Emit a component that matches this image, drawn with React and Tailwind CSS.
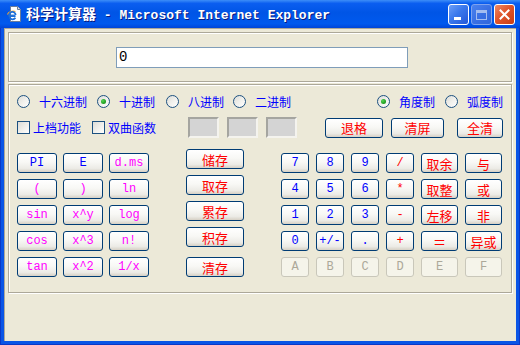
import React from "react";

const MONO = "[font-family:'Liberation_Mono','Noto_Sans_CJK_SC',monospace] text-[12px]";
const CJK = "[font-family:'Noto_Sans_CJK_SC',sans-serif] text-[13px]";
const COLORS = { b: "text-[#0000ff]", m: "text-[#ff00ff]", r: "text-[#ff0000]" };

const isCJK = (s) => /[\u3000-\u9fff\uff00-\uffef]/.test(s);

function Btn({ label, color, w, disabled }) {
  return (
    <div
      className={
        "h-[20px] flex items-center justify-center rounded-[3px] border leading-none " +
        (isCJK(label) ? CJK : MONO) +
        " " +
        w +
        " " +
        (disabled
          ? "border-[#c9c7ba] bg-[#f5f4ea] text-[#aca899]"
          : "border-[#003c74] bg-[linear-gradient(180deg,#ffffff_0%,#f8f8f5_45%,#ecebe6_80%,#d6d0c5_100%)] " + COLORS[color])
      }
    >
      {label}
    </div>
  );
}

function Radio({ checked }) {
  return (
    <div className="w-[13px] h-[13px] rounded-full border border-[#1c5180] bg-[linear-gradient(135deg,#dcdcd7_0%,#f0f0ec_50%,#ffffff_100%)] flex items-center justify-center shrink-0">
      {checked && <div className="w-[5px] h-[5px] rounded-full bg-[radial-gradient(circle_at_35%_35%,#55d455_0%,#21a121_60%,#1a8a1a_100%)]" />}
    </div>
  );
}

function Check() {
  return <div className="w-[13px] h-[13px] border border-[#1c5180] bg-[linear-gradient(135deg,#dcdcd7_0%,#f0f0ec_55%,#ffffff_100%)] shrink-0" />;
}

function RadioItem({ label, checked, className = "" }) {
  return (
    <div className={"flex items-center gap-[9px] " + className}>
      <Radio checked={checked} />
      <span className="text-[12px] leading-none text-[#0000ff] [font-family:'Noto_Sans_CJK_SC',sans-serif] whitespace-nowrap">{label}</span>
    </div>
  );
}

function GrayBox() {
  return <div className="w-[31px] h-[21px] bg-[#d4d4d4] border-2 border-t-[#a5a5a0] border-l-[#a5a5a0] border-r-[#f4f3ee] border-b-[#f4f3ee]" />;
}

const leftRows = [
  [["PI", "b"], ["E", "b"], ["d.ms", "m"]],
  [["(", "m"], [")", "m"], ["ln", "m"]],
  [["sin", "m"], ["x^y", "m"], ["log", "m"]],
  [["cos", "m"], ["x^3", "m"], ["n!", "m"]],
  [["tan", "m"], ["x^2", "m"], ["1/x", "m"]],
];

const rightRows = [
  [["7", "b"], ["8", "b"], ["9", "b"], ["/", "r"], ["取余", "r"], ["与", "r"]],
  [["4", "b"], ["5", "b"], ["6", "b"], ["*", "r"], ["取整", "r"], ["或", "r"]],
  [["1", "b"], ["2", "b"], ["3", "b"], ["-", "r"], ["左移", "r"], ["非", "r"]],
  [["0", "b"], ["+/-", "b"], [".", "b"], ["+", "r"], ["＝", "r"], ["异或", "r"]],
];

function IEIcon() {
  return (
    <svg width="16" height="16" viewBox="0 0 16 16" className="shrink-0">
      <path d="M4.5 0.5h7l3 3v12h-10z" fill="#ffffff" stroke="#6b7c99" />
      <path d="M11.5 0.5v3h3" fill="#dfe4ee" stroke="#6b7c99" />
      <path d="M1.5 8.5c1-3 5-4 8-3" fill="none" stroke="#f0a030" strokeWidth="1.2" />
      <path d="M9.6 10.2H3.4a3.2 3.2 0 1 1 6.2-1.2M3.6 11.2a3.2 3.2 0 0 0 5.8 0.6" fill="none" stroke="#1e6fd9" strokeWidth="1.8" />
      <path d="M4 9.2h5" stroke="#1e6fd9" strokeWidth="1.2" />
    </svg>
  );
}

export default function App() {
  return (
    <div className="w-[520px] h-[345px] overflow-hidden flex flex-col bg-[#0a55e6]">
      {/* Title bar */}
      <div className="h-[28px] shrink-0 flex items-center pl-[6px] pr-[5px] bg-[linear-gradient(180deg,#3d8ef8_0%,#0b5ef0_12%,#0055e6_45%,#0059ee_85%,#0045d8_100%)]">
        <IEIcon />
        <span className="ml-[4px] text-white font-bold leading-none whitespace-nowrap [text-shadow:1px_1px_0_#0a1a80] [font-family:'Liberation_Mono','Noto_Sans_CJK_SC',monospace] text-[13px]">
          <span className="text-[14px] [font-family:'Noto_Sans_CJK_SC',sans-serif]">科学计算器</span> - Microsoft Internet Explorer
        </span>
        <div className="ml-auto flex gap-[2px]">
          <div className="relative w-[21px] h-[21px] rounded-[3px] border border-white bg-[linear-gradient(135deg,#6d9ff7_0%,#3a78ec_45%,#2458d8_100%)]">
            <div className="absolute left-[5px] top-[12px] w-[7px] h-[3px] bg-white" />
          </div>
          <div className="relative w-[21px] h-[21px] rounded-[3px] border border-[#7fa3ee] bg-[linear-gradient(135deg,#4a82ee_0%,#3a70e4_50%,#3066dc_100%)]">
            <div className="absolute left-[4px] top-[5px] w-[11px] h-[10px] border border-[#a4bdf0] border-t-[3px]" />
          </div>
          <div className="relative w-[21px] h-[21px] rounded-[3px] border border-white bg-[linear-gradient(135deg,#ee8a66_0%,#e0552c_45%,#c73d14_100%)] flex items-center justify-center">
            <svg width="11" height="11" viewBox="0 0 11 11">
              <path d="M1.5 1.5l8 8M9.5 1.5l-8 8" stroke="#ffffff" strokeWidth="2" strokeLinecap="square" />
            </svg>
          </div>
        </div>
      </div>

      {/* Body frame */}
      <div className="flex-1 flex px-[3px] pb-[3px] border-x border-b border-[#0a38c8]">
        <div className="flex-1 flex flex-col bg-[#ece9d8] border-l border-t border-[#aca899] pl-[3px] pr-[4px] pt-[3px]">
          {/* Display panel */}
          <div className="h-[50px] border border-[#aca899] shadow-[inset_1px_1px_0_#ffffff,1px_1px_0_#ffffff] flex items-center pl-[107px]">
            <div className="w-[292px] h-[21px] border border-[#7f9db9] bg-white flex items-center pl-[2px] text-[14px] leading-none text-black [font-family:'Liberation_Mono',monospace]">
              0
            </div>
          </div>

          {/* Main panel */}
          <div className="mt-[2px] h-[209px] border border-[#aca899] shadow-[inset_1px_1px_0_#ffffff,1px_1px_0_#ffffff] flex flex-col">
            {/* radio row */}
            <div className="mt-[10px] h-[13px] flex items-center pl-[8px] pr-[8px]">
              <RadioItem label="十六进制" />
              <RadioItem label="十进制" checked className="ml-[10px]" />
              <RadioItem label="八进制" className="ml-[11px]" />
              <RadioItem label="二进制" className="ml-[9px]" />
              <RadioItem label="角度制" checked className="ml-auto" />
              <RadioItem label="弧度制" className="ml-[10px]" />
            </div>

            {/* checkbox row */}
            <div className="mt-[9px] h-[21px] flex items-center pl-[8px]">
              <div className="flex items-center gap-[3px]">
                <Check />
                <span className="text-[12px] leading-none text-[#0000ff] [font-family:'Noto_Sans_CJK_SC',sans-serif]">上档功能</span>
              </div>
              <div className="flex items-center gap-[3px] ml-[11px]">
                <Check />
                <span className="text-[12px] leading-none text-[#0000ff] [font-family:'Noto_Sans_CJK_SC',sans-serif]">双曲函数</span>
              </div>
              <div className="ml-[32px] flex gap-[8px]">
                <GrayBox />
                <GrayBox />
                <GrayBox />
              </div>
              <div className="ml-[28px]">
                <Btn label="退格" color="r" w="w-[58px]" />
              </div>
              <div className="ml-[8px]">
                <Btn label="清屏" color="r" w="w-[53px]" />
              </div>
              <div className="ml-[13px]">
                <Btn label="全清" color="r" w="w-[46px]" />
              </div>
            </div>

            {/* button area */}
            <div className="mt-[11px] flex items-start pl-[8px]">
              <div className="mt-[4px] grid grid-cols-[40px_40px_40px] gap-x-[6px] gap-y-[6px]">
                {leftRows.flat().map(([l, c], i) => (
                  <Btn key={i} label={l} color={c} w="w-[40px]" />
                ))}
              </div>
              <div className="ml-[37px] flex flex-col gap-[6px]">
                <Btn label="储存" color="r" w="w-[58px]" />
                <Btn label="取存" color="r" w="w-[58px]" />
                <Btn label="累存" color="r" w="w-[58px]" />
                <Btn label="积存" color="r" w="w-[58px]" />
                <div className="mt-[4px]">
                  <Btn label="清存" color="r" w="w-[58px]" />
                </div>
              </div>
              <div className="ml-[37px] mt-[4px] grid grid-cols-[28px_28px_28px_28px_37px_37px] gap-x-[7px] gap-y-[6px]">
                {rightRows.flat().map(([l, c], i) => (
                  <Btn key={i} label={l} color={c} w={i % 6 >= 4 ? "w-[37px]" : "w-[28px]"} />
                ))}
                {["A", "B", "C", "D", "E", "F"].map((l, i) => (
                  <Btn key={"d" + i} label={l} disabled w={i >= 4 ? "w-[37px]" : "w-[28px]"} />
                ))}
              </div>
            </div>
          </div>
        </div>
      </div>
    </div>
  );
}
